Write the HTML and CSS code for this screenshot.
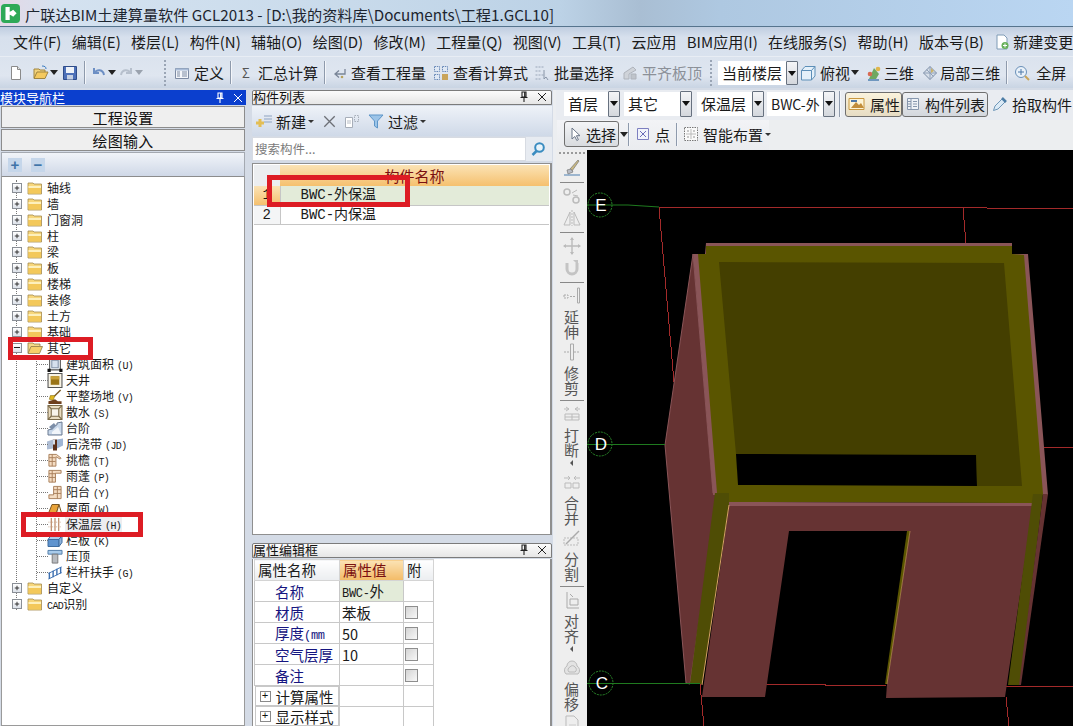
FILE: index.html
```html
<!DOCTYPE html>
<html lang="zh-CN">
<head>
<meta charset="utf-8">
<title>广联达BIM土建算量软件 GCL2013</title>
<link rel="stylesheet" href="styles.css">
</head>
<body>
<svg class="defs" aria-hidden="true">
  <symbol id="folder" viewBox="0 0 16 14"><path d="M1 3V2h5l1 1h7.500v10H1z" fill="#f7d77c" stroke="#a58a4e" stroke-width=".8"/><path d="M1.500 5h12.500v7.500H1.500z" fill="#f3c85a"/><path d="M1.500 5h12.500v2H1.500z" fill="#fdf0bd"/></symbol>
  <symbol id="folder-open" viewBox="0 0 16 14"><path d="M1 12V2h5l1 1h6v2" fill="#f5d987" stroke="#8f7a45" stroke-width=".8"/><path d="M1 12.500 4 5.500h11.500l-3 7z" fill="#f6cf6a" stroke="#8f7a45" stroke-width=".8"/></symbol>
  <symbol id="plus" viewBox="0 0 9 9"><path d="M2 4.500h5M4.500 2v5" stroke="#222" fill="none"/></symbol>
  <symbol id="new" viewBox="0 0 16 16"><path d="M3.500 1.500h6l3 3v10h-9z" fill="#fff" stroke="#8a8a8a"/><path d="M9.500 1.500v3h3" fill="#e6e6e6" stroke="#8a8a8a"/></symbol>
  <symbol id="open" viewBox="0 0 16 16"><path d="M1 13V4h5l1 1h5v2" fill="#f2d27a" stroke="#a08540"/><path d="M1 13.500 4 7h11l-3 6.500z" fill="#f4c95f" stroke="#a08540"/><path d="M9 1c3 0 4 1 4 3" stroke="#3a7ac0" fill="none"/></symbol>
  <symbol id="save" viewBox="0 0 16 16"><path d="M1.500 1.500h13v13h-13z" fill="#4d70b8" stroke="#2e4c8a"/><path d="M4 2h8v6H4z" fill="#eef2f8"/><path d="M5 10h6v4.500H5z" fill="#c4cfe2"/></symbol>
  <symbol id="undo" viewBox="0 0 16 16"><path d="M3 3v5h5M3.500 8C6 4 12 4 13 10" fill="none" stroke="#6d8fc4" stroke-width="2"/></symbol>
  <symbol id="redo" viewBox="0 0 16 16"><path d="M13 3v5H8M12.500 8C10 4 4 4 3 10" fill="none" stroke="#b6bfcc" stroke-width="2"/></symbol>
  <symbol id="define" viewBox="0 0 16 16"><path d="M1.500 3.500h13v10h-13z" fill="#f4f6fa" stroke="#7d8ba3"/><path d="M1.500 3.500h13v2h-13z" fill="#a9bcd8"/><path d="M8 7h5M8 9h5M8 11h5M3 7h3M3 9h3M3 11h3" stroke="#7d8ba3"/></symbol>
  <symbol id="check" viewBox="0 0 16 16"><path d="M14 4v5H5M8 5.500 4 9l4 3.500" fill="none" stroke="#7a8698" stroke-width="1.300"/><circle cx="11" cy="12" r="1.300" fill="#b8a35e"/></symbol>
  <symbol id="formula" viewBox="0 0 16 16"><path d="M1.500 1.500h5v5h-5zM9.500 1.500h5v5h-5zM1.500 9.500h5v5h-5z" fill="#dfe8f4" stroke="#6a8ab8" stroke-dasharray="1.500 .8"/><path d="M9 9h6v6H9z" fill="#c9a45a"/></symbol>
  <symbol id="batch" viewBox="0 0 16 16"><path d="M1.500 2h8M1.500 6h6M1.500 10h8M1.500 14h6" stroke="#9aa6b8" stroke-dasharray="2 1"/><path d="M10 5v9l2-2 2 3" fill="#dbe2ec" stroke="#8a96a8"/></symbol>
  <symbol id="flat" viewBox="0 0 16 16"><path d="M2 14V8l9-6 3 3-7 4v5z" fill="#cfd3d9" stroke="#aeb3bb"/><path d="M9 14V9h5v5z" fill="#bfc4cb" stroke="#aeb3bb"/></symbol>
  <symbol id="top" viewBox="0 0 16 16"><path d="M1.500 5.500 5 1.500h10v9.500l-3.500 4h-10z" fill="#e4f0fa" stroke="#5d8fb8"/><path d="M1.500 5.500h10V15M11.500 5.500 15 1.500" fill="none" stroke="#5d8fb8"/></symbol>
  <symbol id="three" viewBox="0 0 16 16"><path d="M3 14 8 3l5 6-3 5z" fill="#6ea861"/><circle cx="12" cy="4" r="2.300" fill="#e0b64c"/><circle cx="4" cy="9" r="2.300" fill="#d86a52"/><path d="M2 15h11" stroke="#4d7fb0" stroke-width="1.500"/></symbol>
  <symbol id="local" viewBox="0 0 16 16"><path d="M8 1.500 14.500 8 8 14.500 1.500 8z" fill="#d7dfe9" stroke="#7d8ea6"/><path d="M8 1.500v13M1.500 8h13M4.500 4.500l7 7" stroke="#8fa0b8" fill="none"/><path d="M9 3l3 3-3 2z" fill="#c9b26a"/></symbol>
  <symbol id="full" viewBox="0 0 16 16"><circle cx="7" cy="7" r="5.500" fill="#e9f1f9" stroke="#6a90b8"/><path d="M7 4v6M4 7h6" stroke="#4c78a8"/><path d="M11 11l4 4" stroke="#c9a45a" stroke-width="2"/></symbol>
  <symbol id="change" viewBox="0 0 16 16"><path d="M3 1h7l3 3v11H3z" fill="#fff" stroke="#7f9bb6"/><circle cx="11" cy="11.500" r="3.500" fill="#67b05a"/><path d="M9 11.500h4M11 9.500v4" stroke="#fff"/></symbol>
  <symbol id="addnew" viewBox="0 0 18 16"><path d="M8 3h8M8 6h8M8 9h8" stroke="#8ea3c0"/><path d="M4 6v8M0 10h8" stroke="#e3be55" stroke-width="3"/></symbol>
  <symbol id="copy" viewBox="0 0 16 16"><path d="M1.500 4.500h7v10h-7z" fill="#fff" stroke="#a7aeb9"/><path d="M3 8h4M3 10h4" stroke="#b7bdc6"/><path d="M10.500 2.500h4v6h-4z" fill="none" stroke="#a7aeb9" stroke-dasharray="1.500 1"/></symbol>
  <symbol id="filter" viewBox="0 0 16 16"><path d="M1 2h14L9.500 8v7l-3-2V8z" fill="#9cc4e8" stroke="#5d95c8"/></symbol>
  <symbol id="search" viewBox="0 0 16 16"><circle cx="9.500" cy="6.500" r="4.300" fill="#e9f4fb" stroke="#3a8cc0" stroke-width="2"/><path d="M6.500 10 2.500 14" stroke="#3a8cc0" stroke-width="2.500"/></symbol>
  <symbol id="attr" viewBox="0 0 18 16"><path d="M1 2.500h15v11H1z" fill="#fdf4d6" stroke="#c9973e"/><path d="M3 12 8 6l3 3 2-2 3 5z" fill="#c28d3a"/><path d="M3 5h6" stroke="#4f78a8" stroke-width="2"/></symbol>
  <symbol id="list" viewBox="0 0 16 16"><path d="M2.500 2.500h11v11h-11z" fill="#eef2f7" stroke="#8797ad"/><path d="M6 2.500v11M2.500 5.500H6M2.500 8H6M2.500 10.500H6M8 5.500h4M8 8h4M8 10.500h4" stroke="#8797ad" fill="none"/></symbol>
  <symbol id="pick" viewBox="0 0 16 16"><path d="M1.500 14.500 3 10l7-7 3 3-7 7z" fill="#dbeaf6" stroke="#6f97b8"/><path d="M10 2l4 4" stroke="#4d7da6" stroke-width="2.500"/></symbol>
  <symbol id="cursor" viewBox="0 0 16 16"><path d="M5 2v11l2.800-2.500 2 4 1.600-.8-2-4H13z" fill="#fff" stroke="#6b7688"/></symbol>
  <symbol id="point" viewBox="0 0 16 16"><path d="M2.500 2.500h11v11h-11z" fill="#f1f3fb" stroke="#7d7fc0"/><path d="M5 5l6 6M11 5l-6 6" stroke="#6a6cb8"/></symbol>
  <symbol id="smart" viewBox="0 0 16 16"><path d="M1.500 1.500h13v13h-13z" fill="#fafafa" stroke="#777" stroke-dasharray="1.500 1"/><path d="M8 3v10M3 8h10" stroke="#bbb"/><path d="M4.500 4.500h1v1h-1zM10.500 4.500h1v1h-1zM4.500 10.500h1v1h-1zM10.500 10.500h1v1h-1z" fill="#333"/></symbol>
  <symbol id="area" viewBox="0 0 14 14"><path d="M2 1h10v11H2z" fill="#f0f4fa" stroke="#555"/><path d="M4 3h6v7H4z" fill="#d6e0ee" stroke="#8492a8"/><path d="M0 11h3v3H0zM11 11h3v3h-3z" fill="#111"/></symbol>
  <symbol id="well" viewBox="0 0 14 14"><path d="M.500.500h13v13H.500z" fill="#f8f3e4" stroke="#555"/><path d="M3 3h8v8H3z" fill="#9a7416"/><path d="M3 3h8v3H3z" fill="#c9a13b"/></symbol>
  <symbol id="site" viewBox="0 0 16 16"><path d="M14 1 7 8" stroke="#7a5a25" stroke-width="1.500"/><path d="M3 7l5 0-2 5-4-1z" fill="#e0b820" stroke="#806a10" stroke-width=".6"/><path d="M1 16v-3l4-1 3-1 3 2 4 0v3z" fill="#6e3f1c"/></symbol>
  <symbol id="apron" viewBox="0 0 14 14"><path d="M.500.500h13v13H.500z" fill="#e9dcc0" stroke="#7b6a48"/><path d="M3.500 3.500h7v7h-7z" fill="#f8f4ea" stroke="#7b6a48"/><path d="M.500.500l3 3M13.500.500l-3 3M.500 13.500l3-3M13.500 13.500l-3-3" stroke="#7b6a48"/></symbol>
  <symbol id="steps" viewBox="0 0 16 15"><path d="M1 13V9l4-1V5l5-1V2l5-1v13H1z" fill="#c9d8ea" stroke="#6a7a92"/><path d="M2 6l5-4 2 3-4 4z" fill="#7c8ea8"/><path d="M5 11l6-5 3 7H5z" fill="#f1f5fa"/></symbol>
  <symbol id="band" viewBox="0 0 16 14"><path d="M0 4l6-2v9l-6 1z" fill="#aebdd4"/><path d="M10 2l6-1v7l-6 3z" fill="#9fb5d4"/><path d="M6 2h4v11H6z" fill="#5b2f1a"/><path d="M6 2h2v5H6z" fill="#d7dde7"/></symbol>
  <symbol id="eave" viewBox="0 0 16 16"><path d="M1.500 1.500h8l5 4-1 1-4.500-2.500v10h-7.500z" fill="#f4dcc2" stroke="#a87e5a"/><path d="M1.500 5h7M1.500 9h7M5 1.500v12.500" stroke="#a87e5a" fill="none"/></symbol>
  <symbol id="canopy" viewBox="0 0 16 16"><path d="M1.500 1.500h13v3h-6v9.500h-7z" fill="#f4dcc2" stroke="#a87e5a"/><path d="M1.500 5h7M1.500 9h7M5 1.500v12.500" stroke="#a87e5a" fill="none"/></symbol>
  <symbol id="balcony" viewBox="0 0 16 16"><path d="M6.500 1.500h8v13h-13v-4h5z" fill="#f4dcc2" stroke="#a87e5a"/><path d="M6.500 5h8M6.500 9h8M10.500 1.500v13" stroke="#a87e5a" fill="none"/></symbol>
  <symbol id="roof" viewBox="0 0 16 14"><path d="M1 13 5 3h7l-3 10z" fill="#e8a33a" stroke="#7a5520"/><path d="M12 3l3 10H9z" fill="#f7f0e0" stroke="#7a5520"/></symbol>
  <symbol id="insul" viewBox="0 0 16 16"><path d="M4 1v14M8 1v14M12 1v14" stroke="#a9663e"/><path d="M1 5.500h14M1 10.500h14" stroke="#c9a78e" stroke-dasharray="1 1"/></symbol>
  <symbol id="parapet" viewBox="0 0 16 14"><path d="M1 6l3-4h11l-3 4z" fill="#aecbea" stroke="#3f6da0"/><path d="M1 6h11v7H1z" fill="#5f94cf" stroke="#3f6da0"/><path d="M12 6l3-4v7l-3 4z" fill="#8fb4dc" stroke="#3f6da0"/></symbol>
  <symbol id="coping" viewBox="0 0 16 16"><path d="M.500 1.500h15v4H.500z" fill="#a9cbea" stroke="#4d7aa8"/><path d="M5 5.500h6V15H5z" fill="#b9bcc0" stroke="#777"/></symbol>
  <symbol id="rail" viewBox="0 0 16 16"><path d="M1 9 15 2M1 15l14-7" stroke="#3c6fb0" fill="none"/><path d="M2 8v7M6 6v7M10 4v7M14 2v7" stroke="#3c6fb0" stroke-width="1.500" fill="none"/></symbol>
  <symbol id="v-brush" viewBox="0 0 18 18"><path d="M15 1 7 10l2 2 7-10z" fill="#c9b880" stroke="#777" stroke-width=".7"/><path d="M4 11l4-1 2 3-5 2z" fill="#b9bcc4" stroke="#777" stroke-width=".7"/><path d="M1 16h16" stroke="#4d7fb0"/></symbol>
  <symbol id="v-trim" viewBox="0 0 18 18"><circle cx="4" cy="5" r="3" fill="none" stroke="#bbb" stroke-width="1.500"/><circle cx="13" cy="13" r="3" fill="none" stroke="#bbb" stroke-width="1.500"/><path d="M9 6l5-3M10 8l5 1" stroke="#bbb"/></symbol>
  <symbol id="v-mirror" viewBox="0 0 18 18"><path d="M1 16 7 3v13zM17 16 11 3v13z" fill="none" stroke="#bbb"/><path d="M9 1v16" stroke="#bbb" stroke-dasharray="2 1"/></symbol>
  <symbol id="v-move" viewBox="0 0 18 18"><path d="M9 1v16M1 9h16" stroke="#bbb" stroke-width="1.400"/><path d="M9 0l2 3H7zM9 18l2-3H7zM0 9l3-2v4zM18 9l-3-2v4z" fill="#bbb"/></symbol>
  <symbol id="v-rotate" viewBox="0 0 18 18"><path d="M4 4v6a5 5 0 0 0 10 0V4" fill="none" stroke="#c4c4c4" stroke-width="3"/><path d="M10 1h5v5z" fill="#c4c4c4"/></symbol>
  <symbol id="v-extend" viewBox="0 0 18 18"><path d="M14.500 1h2v15h-2z" fill="none" stroke="#aaa"/><path d="M1 8h4v3H1zM7 9.500h6" stroke="#aaa" fill="none" stroke-dasharray="2 1"/></symbol>
  <symbol id="v-cut" viewBox="0 0 18 18"><path d="M7.500 1h3v16h-3z" fill="none" stroke="#aaa"/><path d="M1 9h6M11 9h6" stroke="#aaa" stroke-dasharray="2 1"/></symbol>
  <symbol id="v-break" viewBox="0 0 18 18"><path d="M2 9h14v6H2zM2 12h14M9 9v6" fill="none" stroke="#bbb"/><path d="M1 4h5M3 2l3 2-3 2M17 4h-5M15 2l-3 2 3 2" stroke="#bbb" fill="none"/></symbol>
  <symbol id="v-merge" viewBox="0 0 18 18"><path d="M2 10h6v5H2zM10 10h6v5h-6z" fill="none" stroke="#bbb"/><path d="M1 5h6M5 3l2 2-2 2M17 5h-6M13 3l-2 2 2 2" stroke="#bbb" fill="none"/></symbol>
  <symbol id="v-split" viewBox="0 0 18 18"><path d="M1 9h14v7H1z" fill="none" stroke="#bbb" stroke-dasharray="2 1"/><path d="M3 15 16 2" stroke="#aaa" stroke-width="1.400"/></symbol>
  <symbol id="v-align" viewBox="0 0 18 18"><path d="M4 1v16h12" stroke="#aaa" fill="none"/><path d="M7 8h8v6H7z" fill="none" stroke="#aaa"/><path d="M7 3l3 3" stroke="#aaa"/></symbol>
  <symbol id="v-offset" viewBox="0 0 18 18"><path d="M3 15a5 5 0 0 1 1-8 5 5 0 0 1 10 0 5 5 0 0 1 1 8z" fill="#e3e3e3" stroke="#bbb"/><path d="M6 13a3 3 0 0 1 1-5 3 3 0 0 1 5 0 3 3 0 0 1 0 5z" fill="none" stroke="#bbb"/></symbol>
  <symbol id="v-doc" viewBox="0 0 18 18"><path d="M3 1h8l4 4v12H3z" fill="none" stroke="#bbb"/><path d="M6 10h7M6 13h7" stroke="#ccc"/></symbol>
  <symbol id="logo" viewBox="0 0 18 18"><rect width="18" height="18" rx="3.500" fill="#2ea957"/><path d="M5 3.500v11h2.500v-11zM7.500 8h5.500l-2-2M7.500 9.500h5.500l-2 2" stroke="#fff" stroke-width="1.500" fill="#fff"/></symbol>
  <symbol id="pin" viewBox="0 0 10 12"><path d="M3 1h4v5H3zM1.500 6.500h7M5 7v4" stroke="currentColor" fill="none" stroke-width="1.100"/><path d="M5.800 1v5" stroke="currentColor" stroke-width="1.400"/></symbol>
  <symbol id="close" viewBox="0 0 10 10"><path d="M1 1l8 8M9 1l-8 8" stroke="currentColor" fill="none"/></symbol>
</svg>

<div class="app">
  <header class="title">
    <svg class="logo"><use href="#logo"/></svg>
    <span class="title-text">广联达BIM土建算量软件 GCL2013 - [D:\我的资料库\Documents\工程1.GCL10]</span>
  </header>

  <nav class="menu">
    <span>文件(F)</span><span>编辑(E)</span><span>楼层(L)</span><span>构件(N)</span><span>辅轴(O)</span><span>绘图(D)</span><span>修改(M)</span><span>工程量(Q)</span><span>视图(V)</span><span>工具(T)</span><span>云应用</span><span>BIM应用(I)</span><span>在线服务(S)</span><span>帮助(H)</span><span>版本号(B)</span>
    <span class="menu-tool"><svg class="i16"><use href="#change"/></svg>新建变更</span>
  </nav>

  <div class="toolbar">
    <svg class="i16"><use href="#new"/></svg>
    <svg class="i16 ml9"><use href="#open"/></svg><i class="caret"></i>
    <svg class="i16 ml4"><use href="#save"/></svg>
    <i class="sep ml6"></i>
    <svg class="i16 ml6"><use href="#undo"/></svg><i class="caret ml4"></i>
    <svg class="i16 ml2"><use href="#redo"/></svg><i class="caret ml4 muted"></i>
    <i class="grip ml21"></i>
    <span class="tool ml8"><svg class="i16"><use href="#define"/></svg>定义</span>
    <i class="sep ml6"></i>
    <span class="tool ml9"><b class="sigma">Σ</b>汇总计算</span>
    <i class="sep ml6"></i>
    <span class="tool ml6"><svg class="i16"><use href="#check"/></svg>查看工程量</span>
    <span class="tool ml7"><svg class="i16"><use href="#formula"/></svg>查看计算式</span>
    <span class="tool ml6"><svg class="i16"><use href="#batch"/></svg>批量选择</span>
    <span class="tool ml8 off"><svg class="i16"><use href="#flat"/></svg>平齐板顶</span>
    <i class="grip ml8"></i>
    <span class="select w68 ml6">当前楼层</span><i class="drop"></i>
    <span class="tool ml2"><svg class="i16"><use href="#top"/></svg>俯视</span><i class="caret ml4"></i>
    <span class="tool ml7 tight"><svg class="i16"><use href="#three"/></svg>三维</span>
    <span class="tool ml8 tight"><svg class="i16"><use href="#local"/></svg>局部三维</span>
    <i class="sep ml6"></i>
    <span class="tool ml7 wide"><svg class="i16"><use href="#full"/></svg>全屏</span>
  </div>

  <main class="work">
    <section class="nav">
      <h2 class="pane-head active">模块导航栏<span class="pane-ctl"><svg class="pin"><use href="#pin"/></svg><svg class="x"><use href="#close"/></svg></span></h2>
      <button class="nav-tab" type="button">工程设置</button>
      <button class="nav-tab" type="button">绘图输入</button>
      <div class="tree-tools"><span class="tt">+</span><span class="tt">−</span></div>
      <div class="tree">
        <ul class="branches">
          <li class="node"><i class="tog"><svg><use href="#plus"/></svg></i><svg class="fld"><use href="#folder"/></svg><span>轴线</span></li>
          <li class="node"><i class="tog"><svg><use href="#plus"/></svg></i><svg class="fld"><use href="#folder"/></svg><span>墙</span></li>
          <li class="node"><i class="tog"><svg><use href="#plus"/></svg></i><svg class="fld"><use href="#folder"/></svg><span>门窗洞</span></li>
          <li class="node"><i class="tog"><svg><use href="#plus"/></svg></i><svg class="fld"><use href="#folder"/></svg><span>柱</span></li>
          <li class="node"><i class="tog"><svg><use href="#plus"/></svg></i><svg class="fld"><use href="#folder"/></svg><span>梁</span></li>
          <li class="node"><i class="tog"><svg><use href="#plus"/></svg></i><svg class="fld"><use href="#folder"/></svg><span>板</span></li>
          <li class="node"><i class="tog"><svg><use href="#plus"/></svg></i><svg class="fld"><use href="#folder"/></svg><span>楼梯</span></li>
          <li class="node"><i class="tog"><svg><use href="#plus"/></svg></i><svg class="fld"><use href="#folder"/></svg><span>装修</span></li>
          <li class="node"><i class="tog"><svg><use href="#plus"/></svg></i><svg class="fld"><use href="#folder"/></svg><span>土方</span></li>
          <li class="node"><i class="tog"><svg><use href="#plus"/></svg></i><svg class="fld"><use href="#folder"/></svg><span>基础</span></li>
          <li class="node"><i class="tog minus"></i><svg class="fld"><use href="#folder-open"/></svg><span>其它</span></li>
          <li class="kids">
            <div class="leaf"><svg><use href="#area"/></svg><span>建筑面积<em>(U)</em></span></div>
            <div class="leaf"><svg><use href="#well"/></svg><span>天井</span></div>
            <div class="leaf"><svg><use href="#site"/></svg><span>平整场地<em>(V)</em></span></div>
            <div class="leaf"><svg><use href="#apron"/></svg><span>散水<em>(S)</em></span></div>
            <div class="leaf"><svg><use href="#steps"/></svg><span>台阶</span></div>
            <div class="leaf"><svg><use href="#band"/></svg><span>后浇带<em>(JD)</em></span></div>
            <div class="leaf"><svg><use href="#eave"/></svg><span>挑檐<em>(T)</em></span></div>
            <div class="leaf"><svg><use href="#canopy"/></svg><span>雨蓬<em>(P)</em></span></div>
            <div class="leaf"><svg><use href="#balcony"/></svg><span>阳台<em>(Y)</em></span></div>
            <div class="leaf"><svg><use href="#roof"/></svg><span>屋面<em>(W)</em></span></div>
            <div class="leaf on"><svg><use href="#insul"/></svg><span>保温层<em>(H)</em></span></div>
            <div class="leaf"><svg><use href="#parapet"/></svg><span>栏板<em>(K)</em></span></div>
            <div class="leaf"><svg><use href="#coping"/></svg><span>压顶</span></div>
            <div class="leaf"><svg><use href="#rail"/></svg><span>栏杆扶手<em>(G)</em></span></div>
          </li>
          <li class="node"><i class="tog"><svg><use href="#plus"/></svg></i><svg class="fld"><use href="#folder"/></svg><span>自定义</span></li>
          <li class="node"><i class="tog"><svg><use href="#plus"/></svg></i><svg class="fld"><use href="#folder"/></svg><span><em class="cad">CAD</em>识别</span></li>
        </ul>
      </div>
    </section>

    <section class="mid">
      <h2 class="pane-head">构件列表<span class="pane-ctl"><svg class="pin"><use href="#pin"/></svg><svg class="x"><use href="#close"/></svg></span></h2>
      <div class="list-tools">
        <svg class="i18"><use href="#addnew"/></svg><span class="ml2">新建</span><i class="caret-s"></i>
        <svg class="x-big ml9"><use href="#close"/></svg>
        <svg class="i16 ml8"><use href="#copy"/></svg>
        <svg class="i16 ml8"><use href="#filter"/></svg><span class="ml4">过滤</span><i class="caret-s"></i>
      </div>
      <div class="search"><span class="search-box">搜索构件...</span><svg class="i16 search-i"><use href="#search"/></svg></div>
      <div class="list-body">
        <table class="list">
          <thead><tr><th class="n"></th><th>构件名称</th></tr></thead>
          <tbody>
            <tr class="cur"><td class="n hot">1</td><td class="nm">BWC-外保温</td></tr>
            <tr><td class="n">2</td><td class="nm">BWC-内保温</td></tr>
          </tbody>
        </table>
      </div>
      <h2 class="pane-head prop-head">属性编辑框<span class="pane-ctl"><svg class="pin"><use href="#pin"/></svg><svg class="x"><use href="#close"/></svg></span></h2>
      <div class="prop-body">
        <table class="prop">
          <thead><tr><th>属性名称</th><th class="hot-h">属性值</th><th>附</th></tr></thead>
          <tbody>
            <tr><td class="pn">名称</td><td class="pv cur-v"><span class="mono-s">BWC-</span>外</td><td></td></tr>
            <tr><td class="pn">材质</td><td class="pv">苯板</td><td><i class="cb"></i></td></tr>
            <tr><td class="pn">厚度<span class="mono-s">(mm</span></td><td class="pv">50</td><td><i class="cb"></i></td></tr>
            <tr><td class="pn">空气层厚</td><td class="pv">10</td><td><i class="cb"></i></td></tr>
            <tr><td class="pn">备注</td><td class="pv"></td><td><i class="cb"></i></td></tr>
            <tr class="low"><td class="grp"><i class="ex">+</i>计算属性</td><td></td><td></td></tr>
            <tr class="low"><td class="grp"><i class="ex">+</i>显示样式</td><td></td><td></td></tr>
          </tbody>
        </table>
      </div>
    </section>

    <section class="view">
      <div class="sel-row">
        <span class="select w44">首层</span><i class="drop"></i>
        <span class="select w56 ml4">其它</span><i class="drop"></i>
        <span class="select w54 ml5">保温层</span><i class="drop"></i>
        <span class="select w56 ml3 clip">BWC-外</span><i class="drop"></i>
        <i class="sep ml4"></i>
        <span class="btn on-attr ml5"><svg class="i18"><use href="#attr"/></svg>属性</span>
        <span class="btn list-btn"><svg class="i16"><use href="#list"/></svg>构件列表</span>
        <span class="tool ml4"><svg class="i16"><use href="#pick"/></svg>拾取构件</span>
      </div>
      <div class="draw-row">
        <div class="draw-tools">
          <span class="btn sel-btn"><svg class="i16"><use href="#cursor"/></svg>选择</span><i class="caret"></i>
          <i class="sep"></i>
          <span class="tool ml6"><svg class="i16"><use href="#point"/></svg>点</span>
          <i class="sep ml6"></i>
          <span class="tool ml6"><svg class="i16"><use href="#smart"/></svg>智能布置</span><i class="caret-s"></i>
        </div>
      </div>
      <div class="stage">
        <div class="vtools">
          <i class="vgrip"></i>
          <svg class="vi"><use href="#v-brush"/></svg>
          <i class="vsep"></i>
          <svg class="vi"><use href="#v-trim"/></svg>
          <svg class="vi"><use href="#v-mirror"/></svg>
          <i class="vsep"></i>
          <svg class="vi"><use href="#v-move"/></svg>
          <svg class="vi"><use href="#v-rotate"/></svg>
          <i class="vsep"></i>
          <svg class="vi"><use href="#v-extend"/></svg><span class="vt">延伸</span>
          <svg class="vi"><use href="#v-cut"/></svg><span class="vt">修剪</span>
          <i class="vsep"></i>
          <svg class="vi"><use href="#v-break"/></svg><span class="vt">打断</span><i class="vcaret"></i>
          <svg class="vi"><use href="#v-merge"/></svg><span class="vt">合并</span>
          <svg class="vi"><use href="#v-split"/></svg><span class="vt">分割</span>
          <i class="vsep"></i>
          <svg class="vi"><use href="#v-align"/></svg><span class="vt">对齐</span><i class="vcaret"></i>
          <svg class="vi"><use href="#v-offset"/></svg><span class="vt">偏移</span>
          <svg class="vi"><use href="#v-doc"/></svg>
        </div>
        <svg class="scene" viewBox="587 150 486 576" aria-label="三维视图">
          <rect x="587" y="150" width="486" height="576" fill="#000"/>
          <g fill="none" stroke="#a32a2a" shape-rendering="crispEdges">
            <path d="M659 207H810L1073 208.500"/>
            <path d="M659 207 674 382"/>
            <path d="M963 208 966 244"/>
            <path d="M1044 447H1073"/>
            <path d="M765 684.500 886 685.500"/>
            <path d="M1006 686.500H1073"/>
            <path d="M700 684 704 726"/>
            <path d="M1006 697 1009 726"/>
          </g>
          <path d="M693 254 665 445 686 683 690 684 718 493 713 493Z" fill="#663333" stroke="#8a5558"/>
          <path d="M706 243H1012V254H1028L1048 495H713L693 254H705Z" fill="#8a5558"/>
          <path d="M706 246H1012V254L1024 255 1043 494H1033V503L729 502V493H717L698 254H706Z" fill="#5a5500"/>
          <path d="M719 262 1004 263 1022 486H977L976 455 736 454Z" fill="#443f00"/>
          <path d="M736 454 976 455 977 486 738 485Z" fill="#000"/>
          <path d="M729 502 1033 503V507L729 506Z" fill="#8a5558"/>
          <path d="M729 506H1033L1005 697 886 698 887 684 910 531H789L765 697H702Z" fill="#663333"/>
          <path d="M715 493H729V505L702 684H690Z" fill="#4f4d05"/>
          <path d="M729 505 702 685" fill="none" stroke="#d9a467"/>
          <path d="M1033 494H1043L1020 685H1008Z" fill="#4f4d05"/>
          <path d="M1043 494H1048L1021 685H1019Z" fill="#663333"/>
          <path d="M907 531H910L887 684H885Z" fill="#5a5500"/>
          <path d="M910 531 887 684" fill="none" stroke="#d9a467" stroke-width=".6"/>
          <g fill="#000" stroke="#2a8a2a" stroke-dasharray="2 1">
            <circle cx="600" cy="205" r="12"/>
            <circle cx="600" cy="444" r="12"/>
            <circle cx="601" cy="683" r="12"/>
          </g>
          <g fill="none" stroke="#1f7a1f">
            <path d="M587 205H628L659 207"/>
            <path d="M587 444.500H665"/>
            <path d="M587 683.500H700"/>
          </g>
          <g class="axis">
            <text x="601" y="211">E</text>
            <text x="601" y="450">D</text>
            <text x="602" y="689">C</text>
          </g>
        </svg>
      </div>
    </section>
  </main>

  <i class="mark mark-a"></i>
  <i class="mark mark-b"></i>
  <i class="mark mark-c"></i>
</div>
</body>
</html>
```

FILE: styles.css
```css
* { box-sizing: border-box; }
html, body { margin: 0; padding: 0; background: #d9e1ec; }
body { font-family: "Noto Sans CJK SC", "Liberation Sans", sans-serif; color: #1a1a1a; }
.defs { position: absolute; width: 0; height: 0; overflow: hidden; }
.app { position: relative; width: 1073px; height: 726px; overflow: hidden; display: flex; flex-direction: column; }
i { font-style: normal; display: block; flex: none; }
svg { flex: none; display: block; }
ul { list-style: none; margin: 0; padding: 0; }
h2 { margin: 0; font-weight: 400; }
.i16 { width: 16px; height: 16px; }
.i18 { width: 18px; height: 16px; }

.ml2 { margin-left: 2px; } .ml3 { margin-left: 3px; } .ml4 { margin-left: 4px; } .ml5 { margin-left: 5px; }
.ml6 { margin-left: 6px; } .ml7 { margin-left: 7px; } .ml8 { margin-left: 8px; } .ml9 { margin-left: 9px; }
.ml21 { margin-left: 21px; }

.title { height: 27px; flex: none; display: flex; align-items: center; padding: 1px 0 0 1px; gap: 5px; border-bottom: 1px solid #56748d;
  background: linear-gradient(90deg, #e4d8e6 0, #d4e2f0 60px, #cbdcec 300px, #bcd2e6 560px, #a9bed3 640px, #aec8e1 720px, #bad6f2 1073px); }
.logo { width: 19px; height: 19px; }
.title-text { font-size: 15.200px; line-height: 26px; color: #1d2530; white-space: nowrap; }

.menu { height: 29px; flex: none; display: flex; align-items: center; padding-left: 13px; gap: 10.350px; font-size: 15px; white-space: nowrap;
  background: linear-gradient(#bfcde0, #d7e0ed 35%, #d9e2ee); }
.menu-tool { display: flex; align-items: center; gap: 3px; margin-left: 0; }

.toolbar { height: 32px; flex: none; display: flex; align-items: center; padding-left: 8px; font-size: 15px; white-space: nowrap;
  background: linear-gradient(#dbe3ee, #dfe6f0 60%, #c9d4e3); border-top: 1px solid #e8edf4; }
.tool { display: inline-flex; align-items: center; gap: 4px; white-space: nowrap; }
.tool.tight { gap: 2px; }
.tool.wide { gap: 6px; }
.off { color: #8b9098; }
.sigma { font-weight: 400; width: 12px; text-align: center; color: #555; font-size: 13px; margin-right: 2px; }
.caret { width: 0; height: 0; border: 4px solid transparent; border-top: 5px solid #222; border-bottom: 0; margin-left: 1px; }
.caret.muted { border-top-color: #9aa2ae; }
.caret-s { width: 0; height: 0; border: 3px solid transparent; border-top: 3px solid #333; border-bottom: 0; margin-left: 2px; }
.sep { width: 1px; height: 23px; background: #8e9aac; box-shadow: 1px 0 #f4f6fa; }
.grip { width: 2px; height: 26px; background: repeating-linear-gradient(#9aa5b5 0 2px, transparent 2px 4px); }
.select { display: block; height: 24px; line-height: 24px; background: #fff; padding-left: 4px; font-size: 15px; white-space: nowrap; overflow: hidden; }
.w44 { width: 44px; } .w54 { width: 55px; } .w56 { width: 56px; } .w68 { width: 68px; }
.clip { font-size: 14px; }
.drop { width: 12px; height: 24px; border: 1px solid #67717f; border-radius: 1px; background: linear-gradient(#f4f5f7, #d3d7dd); position: relative; }
.drop::after { content: ""; position: absolute; left: 1px; top: 9px; border: 4px solid transparent; border-top: 5px solid #111; border-bottom: 0; }

.work { flex: 1; min-height: 0; display: flex; padding-top: 2px; background: #d4dbe6; }

.pane-head { position: relative; height: 15px; line-height: 12px; font-size: 13px; padding-left: 0; border: 1px solid #7b7b7b; border-radius: 2px 2px 0 0; background: linear-gradient(#fbfbfb, #e6e6e6); color: #111; white-space: nowrap; }
.pane-head.active { background: #0b3fce; color: #fff; border: 0; border-radius: 0; line-height: 15px; }
.pane-ctl { position: absolute; right: 4px; top: 0; display: flex; align-items: center; gap: 8px; color: #222; }
.active .pane-ctl { color: #fff; right: 3px; top: 2px; }
.pin { width: 10px; height: 12px; }
.x { width: 10px; height: 10px; }

.nav { width: 246px; flex: none; display: flex; flex-direction: column; }
.nav-tab { height: 22px; margin: 1px 1px 0; padding: 0; border: 1px solid #8c8c8c; background: #efefef; font: 15px/21px "Noto Sans CJK SC", sans-serif; color: #111; letter-spacing: .3px; }
.tree-tools { height: 25px; margin: 1px 1px 0; display: flex; align-items: center; gap: 9px; padding-left: 6px; border: 1px solid #a4a9b1; border-bottom: 1px solid #8c8c8c; background: linear-gradient(#f1f4f9, #cfd8e7); }
.tt { width: 14px; height: 14px; line-height: 13px; text-align: center; font-size: 15px; font-weight: 700; color: #3f74a8; background: #c5d6ea; font-family: "Liberation Sans", sans-serif; }
.tree { flex: 1; margin: 0 1px; background: #fff; border: 1px solid #9a9a9a; border-top: 0; padding-top: 3px; }
.branches { margin-left: 14px; width: 220px; border-left: 1px dotted #777; font-size: 12px; line-height: 16px; height: 430px; }
.node { height: 16px; display: flex; align-items: center; margin-left: -5px; }
.node > span { margin-left: 4px; }
.tog { width: 10px; height: 10px; border: 1px solid #8a8f96; background: linear-gradient(#fff, #dde2ea); }
.tog svg { width: 8px; height: 8px; }
.tog.minus::after { content: ""; display: block; width: 6px; height: 1px; margin: 3px 1px; background: #222; }
.fld { width: 16px; height: 14px; margin-left: 5px; }
.kids { margin-left: 19px; border-left: 1px dotted #777; height: 224px; }
.leaf { position: relative; height: 16px; display: flex; align-items: center; padding-left: 11px; }
.leaf::before { content: ""; position: absolute; left: 0; top: 8px; width: 11px; border-top: 1px dotted #777; }
.leaf svg { width: 16px; height: 15px; margin-left: -1px; }
.leaf span { margin-left: 2px; padding: 0 1px; white-space: nowrap; }
.leaf.on span { background: #ededf0; }
em { font: 10px "Liberation Mono", monospace; font-style: normal; margin-left: 3px; letter-spacing: -.6px; }
em.cad { margin: 0; font-size: 10px; }

.mid { width: 300px; margin-left: 6px; flex: none; display: flex; flex-direction: column; }
.list-tools { margin-top: 1px; height: 30px; display: flex; align-items: center; padding-left: 4px; font-size: 15px; background: linear-gradient(#eef2f8, #cfd9e8); }
.x-big { width: 13px; height: 13px; color: #6c6f75; }
.search { height: 24px; margin-top: 1px; display: flex; align-items: center; background: #e7ebf1; }
.search-box { width: 274px; height: 24px; line-height: 21px; background: #fff; border: 1px solid #d7dbe2; color: #7b7b7b; font-size: 12.500px; padding-left: 2px; }
.search-i { margin-left: 4px; }
.list-body { flex: 1; margin-top: 2px; border: 1px solid #8f8f8f; border-right-width: 2px; background: #fff; padding: 1px 1px 0; min-height: 0; height: 371px; }
.list { width: 295px; table-layout: fixed; border-collapse: collapse; font-size: 14px; }
.list th { height: 21px; padding: 0; font-weight: 400; font-size: 15px; line-height: 20px; color: #7a1010; background: linear-gradient(#fbe3b5, #f5c06e); }
.list th.n { background: #eceef0; }
.list .n { width: 26px; text-align: center; font-family: "Liberation Mono", monospace; }
.list td { height: 19px; padding: 0; line-height: 18px; border-bottom: 1px solid #c6c6c6; }
.list td.n { background: #f4f5f6; border-right: 1px solid #c6c6c6; }
.list td.hot { background: linear-gradient(#fbe3b5, #f5c06e); }
.cur td.nm { background: #e3ebd9; }
.nm { padding-left: 20px !important; font-family: "Liberation Mono", "Noto Sans CJK SC", monospace; white-space: nowrap; }
.prop-head { margin-top: 8px; }
.prop-body { height: 167px; flex: none; margin-top: 1px; border-left: 1px solid #8f8f8f; border-right: 2px solid #8f8f8f; background: #fff; padding-left: 1px; overflow: hidden; }
.prop { width: 180px; table-layout: fixed; border-collapse: collapse; font-size: 14.500px; }
.prop th:nth-child(1) { width: 85px; }
.prop th:nth-child(2) { width: 64px; }
.prop th { height: 21px; padding: 0 0 0 3px; text-align: left; font-weight: 400; line-height: 20px; background: linear-gradient(#fff, #ebedf0); border: 1px solid #d4d4d4; }
.prop th.hot-h { color: #7a1010; background: linear-gradient(#fbe3b5, #f3bb66); }
.prop td { height: 21px; padding: 0; line-height: 19px; border: 1px solid #c8c8c8; white-space: nowrap; overflow: hidden; }
.prop tr.low td { height: 20px; line-height: 19px; }
.prop td.pn { padding-left: 20px; color: #151580; }
.prop td.pv { padding-left: 2px; }
.prop td.cur-v { background: #e3ebd9; }
.mono-s { font: 12px "Liberation Mono", monospace; letter-spacing: -.3px; }
.cb { width: 13px; height: 13px; margin: 1px auto 0 1px; border: 1px solid #8e8e8e; background: linear-gradient(135deg, #d4d4d4, #f8f8f8); }
.grp { padding-left: 4px !important; display: flex; align-items: center; gap: 5px; }
.ex { width: 11px; height: 11px; border: 1px solid #8a8a8a; font: 11px/9px "Liberation Mono", monospace; text-align: center; color: #111; }

.view { flex: 1; margin-left: 1px; min-width: 0; display: flex; flex-direction: column; padding-left: 3px; background: #eceef1; }
.sel-row { height: 30px; flex: none; display: flex; align-items: center; padding: 0 0 2px 8px; font-size: 15px; white-space: nowrap; background: #e9ecf1; }
.sel-row .drop { height: 26px; }
.sel-row .sep { height: 26px; }
.btn { display: inline-flex; align-items: center; gap: 3px; height: 25px; padding: 0 2px; border: 1px solid #6f6f6f; border-radius: 3px; background: linear-gradient(#eef0f3, #d3d7dd); white-space: nowrap; }
.on-attr { background: linear-gradient(#fbf3dc, #e6dcc4); width: 57px; gap: 4px; }
.list-btn { gap: 4px; }
.draw-row { height: 30px; flex: none; background: #eceef0; }
.draw-tools { width: 212px; height: 30px; margin-left: 1px; display: flex; align-items: center; padding: 0 0 2px 7px; font-size: 15px; background: linear-gradient(#f2f3f6, #eaecef); }
.sel-btn { width: 56px; height: 26px; background: linear-gradient(#f4f5f7, #d8dbdf); }
.stage { flex: 1; min-height: 0; display: flex; }
.vtools { width: 31px; flex: none; display: flex; flex-direction: column; align-items: center; background: #eeeeee; color: #555; font-size: 14px; overflow: hidden; }
.vgrip { width: 26px; height: 2px; margin: 2px 0 5px; background: repeating-linear-gradient(90deg, #9a9a9a 0 2px, transparent 2px 4px); }
.vi { width: 18px; height: 18px; margin-bottom: 4px; }
.vsep { width: 24px; height: 1px; background: #888; margin: 1px 0 4px; }
.vt { width: 15px; display: block; line-height: 15px; font-size: 15px; margin: 0 0 4px; text-align: center; }
.vcaret { width: 0; height: 0; border: 3px solid transparent; border-right: 3px solid #555; border-left: 0; margin: -1px 0 7px; }
.scene { flex: 1; width: 486px; height: 576px; }
.axis text { font: 17px "Liberation Sans", sans-serif; fill: #fff; text-anchor: middle; }

.mark { position: absolute; border: 5px solid #dd1c24; pointer-events: none; }
.mark-a { left: 8px; top: 337px; width: 85px; height: 23px; }
.mark-b { left: 21px; top: 512px; width: 122px; height: 25px; }
.mark-c { left: 267px; top: 175px; width: 143px; height: 32px; }
```
